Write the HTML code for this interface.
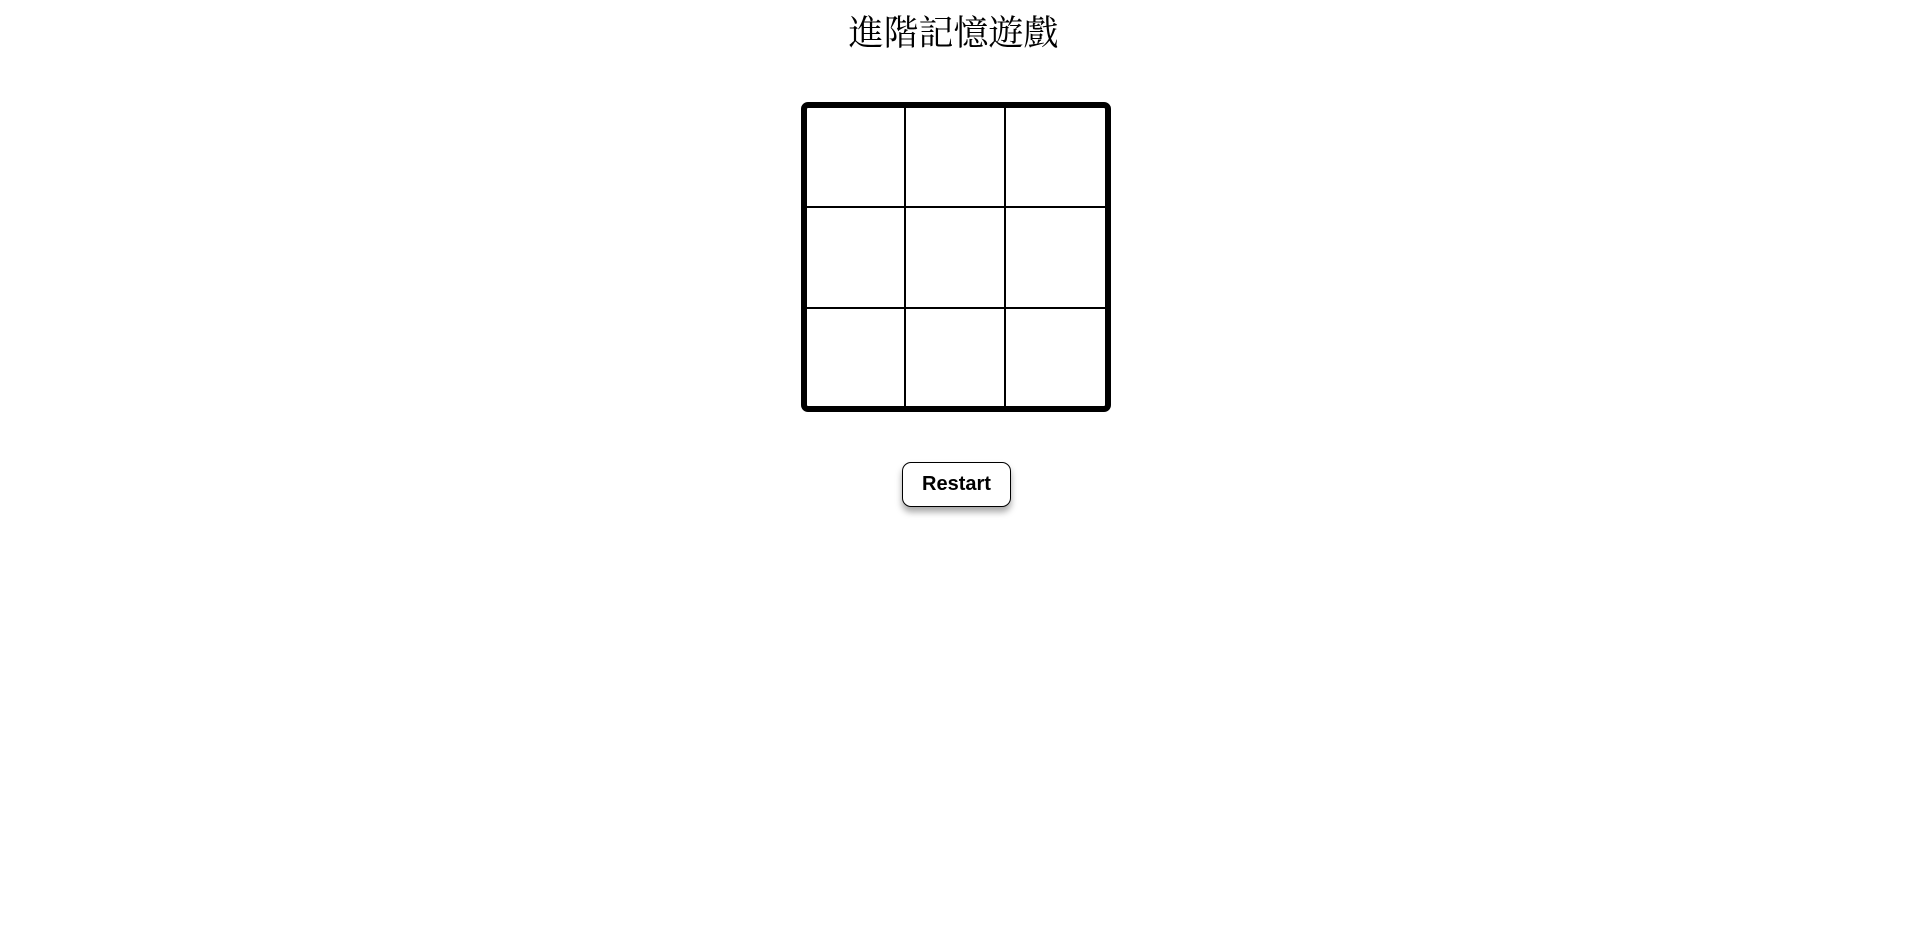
<!DOCTYPE html>
<html><head><meta charset="utf-8"><style>
html,body{margin:0;padding:0;background:#fff;width:1907px;height:937px;overflow:hidden}
h1{position:absolute;left:0;width:1907px;top:13px;margin:0;text-align:center;font-family:"Liberation Serif","Noto Serif CJK SC",serif;font-weight:normal;font-size:35px;line-height:42px;color:#000}
.grid{position:absolute;left:801px;top:102px;width:298px;height:298px;border:6px solid #000;border-radius:7px;display:grid;grid-template-columns:99px 100px 99px;grid-template-rows:100px 101px 97px}
.grid div{box-sizing:border-box;border-right:2px solid #000;border-bottom:2px solid #000}
.grid div:nth-child(3n){border-right:none}
.grid div:nth-child(n+7){border-bottom:none}
button{position:absolute;left:902px;top:462px;width:109px;height:45px;background:#fff;border:1px solid #000;border-radius:9px;font-family:"Liberation Sans",sans-serif;font-weight:bold;font-size:20px;box-shadow:0 5px 7px rgba(0,0,0,0.35);padding:0}
</style></head><body>
<h1>進階記憶遊戲</h1>
<div class="grid"><div></div><div></div><div></div><div></div><div></div><div></div><div></div><div></div><div></div></div>
<button>Restart</button>
</body></html>
